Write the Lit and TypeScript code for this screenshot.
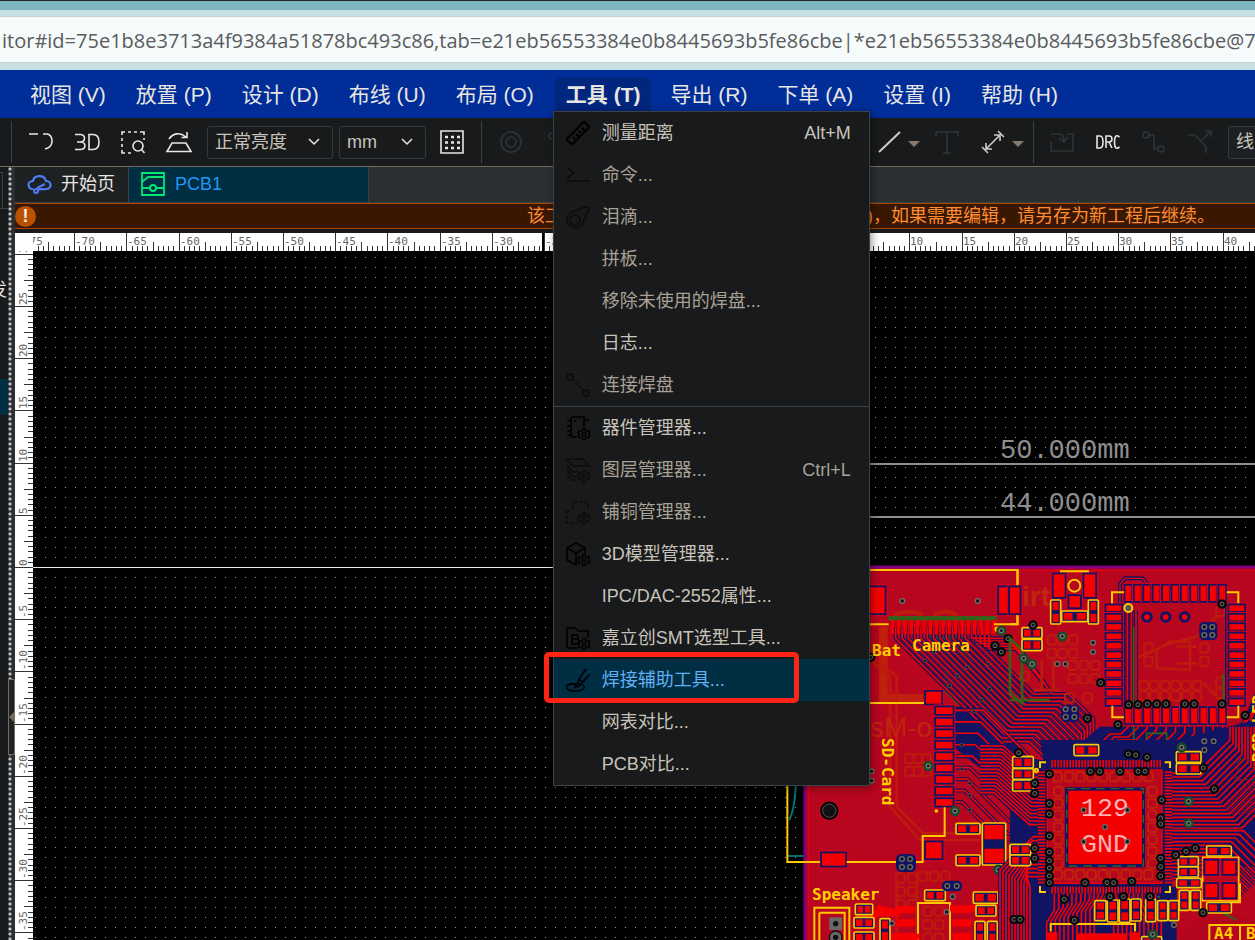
import { LitElement, html, svg, css } from "lit";
import { customElement } from "lit/decorators.js";
import { classMap } from "lit/directives/class-map.js";

/* ---------- icons (24 x 24, stroked with currentColor) ---------- */
const gear = svg`<g stroke-width="1.300"><circle cx="18" cy="18" r="1.800"/><path d="M17 12.500h2l.5 2 1.700.8 1.500-.8 1 2-1 1.500 1 1.500-1 2.200-1.700-.7-1.500.8-.5 1.700h-2l-.6-1.700-1.500-.8-1.700.7-1-2.200 1.200-1.500-1.200-1.500 1-2 1.700.8 1.500-.8z"/></g>`;
const icons: Record<string, unknown> = {
  track: svg`<path d="M0 4h9M14 4h4a5 7 0 0 1 5 7c0 4-3 7-7 8"/>`,
  view3d: svg`<path d="M0 4.500h5c6 0 6 7.500 0 7.500H2h3c6.500 0 6.500 7.500 0 7.500H0M14 4.500h4c4 0 6 3 6 7.500s-2 7.500-6 7.500h-4z"/>`,
  area: svg`<path d="M1 5V2h3M7 2h3M13 2h3M19 2h4v3M1 8v3M1 14v3M1 20v3h3M7 23h3M23 8v2"/><circle cx="17" cy="16" r="5"/><path d="M20.500 19.500l3 3.500"/>`,
  flip: svg`<path d="M5 13h14l5 8.500H0zM2 9c4-6 11-7 17-2M20 2v5.500h-5.500"/>`,
  grid: svg`<path d="M1 1h22v22H1z"/><path d="M5 7h3M11 7h3M17 7h3M5 12.500h3M11 12.500h3M17 12.500h3M5 18h3M11 18h3M17 18h3" stroke-width="2.500"/>`,
  via: svg`<circle cx="12" cy="12" r="10"/><circle cx="12" cy="12" r="5"/>`,
  node: svg`<circle cx="7" cy="6" r="3"/><path d="M9 8l10 10"/><circle cx="20" cy="20" r="3"/>`,
  line: svg`<path d="M2 22L23 2" stroke-width="2"/>`,
  text: svg`<path d="M1 6V2h22v4M12 2v21M8 23h8"/>`,
  dim: svg`<path d="M4 20L20 4M5 13v6h6M13 5h6v6M1 17l6 6M17 1l6 6"/>`,
  load: svg`<path d="M1 4h8c4 0 5 3 5 7M9 8l5 4 4-5M17 4h6v17H1V12"/>`,
  drc: svg`<path d="M1 6v12h3c2 0 3-2 3-6s-1-6-3-6zM10 18V6h3c4 0 4 6 0 6h-3m3 0l3 6M23.500 7c-4-3-5 0-5 5s1 8 5 5"/>`,
  net: svg`<circle cx="4" cy="5" r="3"/><circle cx="19" cy="19" r="3"/><path d="M7 5h5v14h4"/>`,
  branch: svg`<path d="M0 5h7l11 12v6M13 11L23 1M17 1h6v6"/>`,
  ruler: svg`<path d="M1 18L17 1.500q1-1 2 0L22.500 5q1 1 0 2L7 22.500q-1 1-2 0L1 19z" stroke-width="2"/><path d="M7 16l2 2M10 13l3 3M13 10l2 2M16 7l3 3" stroke-width="2"/>`,
  command: svg`<path d="M1 4l7 6-7 5M0 18h24"/>`,
  tear: svg`<circle cx="9" cy="15" r="5"/><path d="M1 15a8.500 8.500 0 0 0 16 3c2-5 3-9 6-13q0-4-4-3L7 6.500c-4 1-6 4-6 8.500"/>`,
  join: svg`<circle cx="4" cy="4" r="3"/><circle cx="20" cy="20" r="3"/><path d="M6 6l12 12" stroke-dasharray="3 2"/>`,
  device: svg`<path d="M5 5V3q0-2 2-2h11v10M5 5v14q0 2 2 2h4M1 5h4M1 10h4M1 15h4M1 19h4M18 4h5M9 4v2"/>${gear}`,
  layers: svg`<path d="M1 1h16l6 7H7zM1 7l6 7h5M1 12l6 7h4M1 17l5 5h4"/>${gear}`,
  copper: svg`<path d="M7 10V2h15v8M1 11h5M1 11v12h10" stroke-dasharray="3 2"/>${gear}`,
  cube: svg`<path d="M1 6l9-5 9 5v5M1 6v12l9 5V11M1 6l9 5 9-5"/>${gear}`,
  bom: svg`<path d="M1 22V2h8l3 3h10v7M1 22h11M6 9v9h4c4 0 4-5 0-5H6m0-4h4c3 0 3 4 0 4"/>${gear}`,
  solder: svg`<path d="M20 1L13 11M24 6L17 14M13 11l4 3-2 3-3-2zM12 15l-4 5 7-3"/><path d="M10 16c-12-1-13 7-1 7 9 0 11-4 8-6"/>`,
  cloud: svg`<path d="M6 17c-6 0-6-8 0-8C7 3 17 2 19 9c6 0 6 8 0 8-4 1-6-1-8 1" stroke-width="2.200"/><circle cx="9" cy="19" r="2" stroke-width="2"/><path d="M10 16l8-4" stroke-width="2"/>`,
  board: svg`<path d="M1 1h22v22H1zM1 10l6-5h16M1 16h8" stroke-width="1.800"/><circle cx="12" cy="16" r="3" stroke-width="2"/><path d="M15 16h8" stroke-width="2"/>`,
};
const icon = (name: string) =>
  html`<svg class="icon" viewBox="0 0 24 24" aria-hidden="true">${icons[name]}</svg>`;

/* ---------- ruler geometry ---------- */
const MM = 10.44;
const range = (n: number, from = 0) => Array.from({ length: n }, (_, i) => i + from);

/* ---------- board palette and drawing helpers ---------- */
const NAVY = "#111463";
const RED = "#f50000";
const YEL = "#ffc800";
const GREEN = "#37601c";

const pad = (x: number, y: number, w: number, h: number) => svg`
  <rect x=${x - 7} y=${y - 7} width=${w + 14} height=${h + 14} rx="4" fill=${NAVY} stroke="#e5001a" stroke-width="3"/>
  <rect x=${x} y=${y} width=${w} height=${h} fill=${RED}/>`;
const pair = ([x, y, w, h]: number[]) => {
  const wide = w > h;
  const pw = wide ? w * 0.34 : w - 12;
  const ph = wide ? h - 12 : h * 0.34;
  return svg`<rect x=${x} y=${y} width=${w} height=${h} rx="4" fill=${NAVY} stroke=${YEL} stroke-width="5"/>
    <rect x=${x + 6} y=${y + 6} width=${pw} height=${ph} fill=${RED}/>
    <rect x=${x + w - 6 - pw} y=${y + h - 6 - ph} width=${pw} height=${ph} fill=${RED}/>`;
};
const via = ([x, y]: number[]) => svg`<circle cx=${x} cy=${y} r="7" fill="#111" stroke="#6f6f6f" stroke-width="4"/>`;
const dark = ([x, y]: number[]) => svg`<circle cx=${x} cy=${y} r="10" fill="#111" stroke="#050505" stroke-width="8"/><circle cx=${x} cy=${y} r="6" fill="#111" stroke="#6f6f6f" stroke-width="3"/>`;
const green = ([x, y]: number[]) => svg`<circle cx=${x} cy=${y} r="12" fill="#142" stroke="#194a26" stroke-width="7"/><circle cx=${x} cy=${y} r="6" fill="#111" stroke="#777" stroke-width="4"/>`;
const trace = (d: string) => svg`<path d=${d} stroke=${NAVY} stroke-width="12"/>`;
const wire = (d: string) => svg`<path d=${d} stroke=${RED} stroke-width="5"/>`;
const bundle = (paths: string[]) => svg`<g fill="none" stroke-linejoin="round">${paths.map(trace)}${paths.map(wire)}</g>`;
const ghosts = (x: number, y: number, cols: number, rows: number, dx: number, dy: number) =>
  range(cols * rows).map((i) => svg`<rect x=${x + (i % cols) * dx} y=${y + Math.floor(i / cols) * dy} width="26" height="28" rx="8"/>`);

const cameraBus = range(14).map((i) => {
  const x = 347 + 19 * i;
  const level = 545 - 11 * i;
  const col = 823 + 9 * i;
  const run = 75;
  return `M${x} 200V235L${x + level - 235} ${level}H${Math.max(col - run, x + level - 235)}L${col} ${level + run}V740`;
});
const sdBus = range(9).map((j) => {
  const y = 451 + 34.4 * j;
  const turn = 610 - 8 * j;
  const end = 640 + 26 * j;
  return `M520 ${y}H${turn}L${turn + end - y} ${end}H810`;
});
const sensorBus = range(5).map((j) => `M${575 + j * 13} 225V${235 + j * 8}H${680 + j * 10}L${760 + j * 14} ${330 + j * 18}`);
const topFan = range(11).map((i) => {
  const x = 355 + 28.3 * i;
  return `M${x} 480V${500 + i * 3}L${x - 22 - i * 6} ${522 + i * 9}H${300 + i * 12}L${262 + i * 16} ${560 + i * 9}V620`;
});
const leftFan = range(15).map((k) => `M105 ${100 + 11 * k}H${72 - k}L${-20 - k * 2} ${18 + 11 * k - k}H-90`);
const lowLeftFan = range(11).map((k) => `M105 ${290 + 12 * k}H${70 - k * 2}L${-30 + k * 9} ${390 + 5 * k}V620`);
const bottomFan = range(24).map((k) => `M${133 + 13.2 * k} 440V${462 + Math.abs(12 - k) * 4}L${k < 12 ? 110 + 13 * k : 155 + 13 * k} ${500 + Math.abs(12 - k) * 4}V620`);
const rightUp = range(16).map((k) => `M460 ${100 + 11 * k}H${560 + k * 9}L${660 + k * 9} ${k * 11}V-40`);
const rightLow = range(14).map((k) => `M460 ${272 + 11 * k}H${700 - k * 12}L${800 - k * 12} ${372 + k * 11}`);

const boardLeft = svg`
  <g fill="none" stroke="#bd1b0d" stroke-width="8">
    <path d="M310 200V415H430" stroke="#c0200c" stroke-width="26"/>
    <path d="M270 300L330 350V740L420 840H600M290 300L350 350V740L430 820H620M350 960V1140M410 960V1140"/>
    <path d="M340 165q50-20 90 0M460 165q40-20 70 0" stroke-width="12"/>
    <g stroke-width="6">${ghosts(375, 582, 3, 2, 26, 38)}${ghosts(348, 940, 2, 3, 36, 40)}${ghosts(415, 935, 3, 1, 34, 30)}${ghosts(430, 1040, 2, 3, 34, 40)}</g>
  </g>
  <text x="270" y="530" font-size="84" fill="#be250c" font-family="Liberation Sans">sM-orbil</text>
  <path d="M440 225L540 225L740 425V540L690 540Z" fill="#4a2a2a"/>
  <path d="M325 175H650M460 240l60 0 60 60M500 330l0 60 40 40" stroke=${GREEN} stroke-width="14" fill="none"/>
  <path d="M520 440H600L700 540 800 640V800H720L620 640 520 560Z" fill=${NAVY}/>
  ${bundle(cameraBus)}${bundle(sdBus)}${bundle(sensorBus)}
  ${range(17).map((i) => svg`<rect x=${332 + 19 * i} y="180" width="10" height="42" fill=${RED}/>`)}
  ${pad(230, 82, 84, 78)}${pad(657, 82, 62, 78)}
  ${pad(438, 395, 46, 36)}${range(9).map((j) => pad(468, 442 + 34.4 * j, 50, 20))}
  ${pad(438, 847, 47, 48)}${pad(126, 880, 70, 37)}
  <g fill="none" stroke=${YEL} stroke-width="6">
    <path d="M240 30H713V76M713 165V193H642M240 193H326M240 429H432M22 600V906H120M200 906H428V828H494V742"/>
    <path d="M103 1140V1043H208V1140M118 1140V1075M118 1058H194V1140M118 1058V1078M414 1140V1029H510V1140"/>
  </g>
  <g stroke=${YEL} stroke-width="5" fill=${YEL}><circle cx="652" cy="208" r="6"/><circle cx="469" cy="753" r="3"/></g>
  <path d="M270 1060H360L300 1045 265 1090M510 1045H590M330 1130H420" stroke=${RED} stroke-width="18" fill="none"/>
  ${range(3).map((i) => svg`<rect x="345" y=${1038 + i * 40} width="62" height="22" rx="10" fill=${RED}/><rect x="515" y=${1038 + i * 40} width="60" height="22" rx="10" fill=${RED}/>`)}
  ${[[528, 790, 72, 32], [528, 885, 72, 32], [434, 990, 62, 32], [580, 996, 74, 34], [588, 1036, 60, 32], [226, 1032, 52, 32], [222, 1072, 60, 32], [222, 1116, 60, 32], [300, 1076, 30, 70], [585, 1084, 30, 66], [622, 1084, 30, 66], [699, 590, 60, 34], [699, 624, 60, 34], [699, 660, 60, 34], [690, 853, 62, 32], [690, 885, 62, 32], [607, 789, 70, 126]].map(pair)}
  <g fill=${NAVY}><rect x="348" y="882" width="60" height="54" rx="16"/><rect x="486" y="962" width="60" height="32" rx="14"/></g>
  ${[[367, 123], [593, 123], [275, 634], [275, 662], [366, 897], [390, 897], [366, 921], [390, 921], [502, 978], [530, 978], [518, 1010], [336, 1090], [500, 1056]].map(via)}
  ${[[435, 302], [462, 276], [561, 321], [533, 348], [509, 377], [629, 387], [605, 420], [582, 454], [545, 555], [545, 627], [569, 670], [569, 706], [569, 750], [625, 312], [677, 961], [677, 980]].map(([x, y]) => svg`<circle cx=${x} cy=${y} r="5" fill="#111" stroke="#666" stroke-width="2"/>`)}
  ${[[684, 236], [645, 257], [664, 276], [272, 292], [692, 1080], [714, 1080], [692, 920]].map(dark)}
  ${[[664, 212], [445, 618], [525, 753], [655, 929], [677, 1048]].map(green)}
  <circle cx="148" cy="752" r="24" fill="#111" stroke="#000" stroke-width="7"/><circle cx="148" cy="752" r="20" fill="none" stroke="#777" stroke-width="2"/>
  <rect x="148" y="1072" width="38" height="38" fill="#686868"/><circle cx="167" cy="1091" r="8" fill="#111"/><circle cx="167" cy="1132" r="19" fill="#686868" stroke="#111" stroke-width="4"/><circle cx="167" cy="1132" r="8" fill="#111"/>`;

const boardTop = svg`
  <g fill="none" stroke="#bd1b0d" stroke-width="6">
    ${ghosts(112, 226, 3, 2, 32, 40)}${ghosts(175, 302, 3, 2, 34, 40)}${ghosts(30, 335, 1, 1, 30, 30)}${ghosts(165, 400, 2, 1, 55, 30)}
    ${ghosts(388, 362, 6, 2, 32, 32)}${ghosts(402, 250, 1, 2, 30, 40)}${ghosts(570, 250, 1, 2, 30, 40)}${ghosts(618, 352, 1, 2, 30, 34)}${ghosts(618, 140, 1, 1, 30, 34)}
    <path d="M70 390H150M95 300V390M130 300V390M365 300L480 250 560 230 620 170M440 325V270L480 245H540V330ZM500 260h60M500 310h60M580 370l60 60" stroke-width="8"/>
  </g>
  <text x="36" y="138" font-size="84" fill="#c0280c" font-family="Liberation Sans" font-weight="700">irt</text>
  <path d="M0 235L36 270V430L0 400ZM280 300h20M0 420l120 0" stroke=${GREEN} stroke-width="8" fill="none"/>
  <path d="M270 500H650L520 600H160L200 560Z" fill=${NAVY}/>
  <path d="M650 600L735 400V600Z" fill=${NAVY}/>
  ${bundle(topFan)}
  ${bundle(range(5).map((k) => `M${640 + k * 18} 620L${690 + k * 16} ${540 - k * 6}V${500 - k * 10}L760 ${420 - k * 10}`))}
  <path d="M330 130V72L345 55H398L412 72V100" stroke=${NAVY} stroke-width="12" fill="none"/><path d="M330 130V72L345 55H398L412 72V100" stroke=${RED} stroke-width="4" fill="none"/>
  <rect x="341" y="128" width="308" height="312" fill="none" stroke=${NAVY} stroke-width="8"/>
  ${bundle(["M352 150V470", "M364 150V470", "M378 150V470"])}
  <path d="M371 200V600M640 340V440M410 520V600H470V520Z" stroke=${GREEN} stroke-width="5" fill="none"/>
  ${range(11).map((i) => svg`${pad(346 + 28.2 * i, 77, 18, 46)}${pad(346 + 28.2 * i, 444, 18, 46)}${pad(289, 136 + 28.2 * i, 45, 17)}${pad(658, 136 + 28.2 * i, 45, 17)}`)}
  ${pad(0, 82, 29, 78)}${pad(131, 43, 33, 68)}${pad(223, 43, 33, 68)}${pad(178, 108, 32, 34)}
  <g fill="none" stroke=${YEL} stroke-width="6"><path d="M0 30H22V76M22 165V193H0M150 34H237M306 130V97H342M650 97H685V130M307 437V472H342M650 472H685V437"/><circle cx="193" cy="77" r="18"/><circle cx="355" cy="144" r="12" fill="#555"/></g>
  ${[[122, 120, 30, 72], [235, 120, 30, 72], [155, 153, 78, 32], [36, 203, 60, 32], [36, 238, 60, 34], [192, 553, 74, 34], [498, 575, 74, 34]].map(pair)}
  ${[411, 467, 524].map((x) => svg`<circle cx=${x} cy="171" r="13" fill=${RED} stroke=${NAVY} stroke-width="9"/>`)}
  <g fill=${NAVY}><rect x="568" y="186" width="54" height="54" rx="14"/><rect x="153" y="436" width="54" height="50" rx="14"/></g>
  ${[[583, 201], [607, 201], [583, 225], [607, 225], [249, 248], [249, 276], [167, 448], [193, 448], [167, 471], [193, 471], [142, 312], [166, 312], [583, 543], [611, 543], [583, 570]].map(via)}
  ${[[69, 195], [636, 132], [356, 434], [384, 434], [412, 432], [440, 432], [468, 432], [524, 432], [552, 432], [636, 432], [324, 494], [232, 475], [706, 466], [26, 579], [272, 368], [355, 585], [377, 585]].map(dark)}
  ${[[157, 229], [41, 295], [66, 312], [515, 562]].map(green)}`;

const boardChip = svg`
  <path d="M0 40L90 60V540L0 600ZM90 0H500L735 -60V380H480V60H100ZM90 440H500V600H0V500Z" fill=${NAVY}/>
  <path d="M500 600L600 500 735 540V600ZM600 230L735 100V220ZM240 460h200v30h-200z" fill="#b3061e"/>
  <g fill="none" stroke=${GREEN} stroke-width="6"><path d="M0 400V600M30 420V560M60 430V600M250 470h200M520 330l60-30M660 80l60-40M690 60h45v60h-60zM600 500l80 40"/></g>
  ${bundle(leftFan)}${bundle(lowLeftFan)}${bundle(bottomFan)}${bundle(rightUp)}${bundle(rightLow)}
  <rect x="84" y="60" width="402" height="400" fill=${NAVY}/>
  ${range(37).map((i) => svg`<g fill=${RED}><rect x=${124 + 9 * i} y="60" width="5" height="22"/><rect x=${124 + 9 * i} y="440" width="5" height="20"/><rect x="84" y=${94 + 9.2 * i} width="22" height="5"/><rect x="464" y=${94 + 9.2 * i} width="22" height="5"/></g>`)}
  <rect x="112" y="90" width="344" height="340" fill="#b8061f" stroke=${RED} stroke-width="4"/>
  <g fill="none" stroke="#c0200c" stroke-width="6">
    ${ghosts(130, 96, 9, 1, 34, 30)}${ghosts(130, 390, 9, 1, 34, 30)}${ghosts(132, 140, 1, 7, 30, 36)}${ghosts(414, 140, 1, 7, 30, 36)}
  </g>
  <rect x="165" y="142" width="240" height="240" fill=${NAVY}/><path d="M170 146H400V378H170Z" fill="none" stroke=${GREEN} stroke-width="4" stroke-dasharray="26 18"/>
  <rect x="175" y="152" width="221" height="220" fill=${RED}/>
  <text x="285" y="228" font-size="80" text-anchor="middle" fill="#ffb0b0" font-family="Liberation Mono">129</text>
  <text x="285" y="336" font-size="80" text-anchor="middle" fill="#ffb0b0" font-family="Liberation Mono">GND</text>
  <g fill="none" stroke=${YEL} stroke-width="6"><path d="M90 84V67H108M464 67H480V84M90 438V456H108M464 456H480V438M122 574V552H375V574M690 430V487H660"/><circle cx="79" cy="91" r="5"/></g>
  <g fill=${RED}><rect x="198" y="580" width="150" height="20"/><rect x="112" y="577" width="30" height="23"/><rect x="358" y="577" width="30" height="23"/></g>
  ${[[192, 14, 74, 33], [8, 50, 62, 34], [8, 86, 62, 32], [8, 120, 62, 33], [0, 313, 62, 32], [0, 345, 62, 32], [499, 35, 74, 32], [499, 70, 74, 32], [590, 318, 74, 30], [505, 350, 60, 30], [505, 381, 60, 30], [500, 415, 74, 28], [508, 451, 30, 60], [542, 451, 30, 60], [590, 487, 74, 32], [254, 482, 34, 60], [292, 480, 32, 66], [328, 477, 32, 70], [363, 477, 30, 66], [407, 477, 30, 68], [443, 482, 30, 60], [476, 482, 30, 60], [395, 590, 60, 30]].map(pair)}
  <rect x="578" y="352" width="108" height="130" fill="#b8061f" stroke=${YEL} stroke-width="5"/>
  ${pad(586, 362, 36, 40)}${pad(640, 362, 36, 40)}${pad(586, 432, 36, 40)}${pad(640, 432, 36, 40)}
  <g fill="#b8061f" stroke=${YEL} stroke-width="6"><rect x="598" y="555" width="92" height="60"/><rect x="690" y="555" width="92" height="60"/></g>
  ${[[221, 210], [352, 210], [285, 261], [221, 305], [352, 305], [492, 555], [583, 4], [611, 4], [583, 30]].map(via)}
  ${[[118, 102], [241, 94], [269, 94], [330, 94], [384, 94], [405, 94], [118, 190], [118, 222], [118, 288], [118, 336], [118, 362], [118, 384], [118, 408], [118, 428], [225, 428], [291, 428], [311, 428], [365, 424], [455, 180], [452, 234], [452, 252], [452, 355], [452, 380], [452, 408], [163, 478], [193, 541], [12, 538], [30, 538], [26, 38], [613, 147], [580, 84], [497, 345], [528, 334], [556, 325], [579, 518], [411, 52], [355, 42], [377, 45], [74, 130], [74, 160], [300, 470], [340, 470], [420, 470], [74, 325], [74, 355]].map(dark)}
  ${[[536, 184], [536, 250], [515, 22], [428, 583]].map(green)}`;

const silk = (x: number, y: number, label: string) =>
  svg`<text x=${x} y=${y} class="silk">${label}</text>`;

interface Entry { label: string; icon?: string; key?: string; off?: boolean; active?: boolean; rule?: boolean; }
const entries: Entry[] = [
  { label: "测量距离", icon: "ruler", key: "Alt+M" },
  { label: "命令...", icon: "command", off: true },
  { label: "泪滴...", icon: "tear", off: true },
  { label: "拼板...", off: true },
  { label: "移除未使用的焊盘...", off: true },
  { label: "日志..." },
  { label: "连接焊盘", icon: "join", off: true },
  { label: "器件管理器...", icon: "device", rule: true },
  { label: "图层管理器...", icon: "layers", key: "Ctrl+L", off: true },
  { label: "铺铜管理器...", icon: "copper", off: true },
  { label: "3D模型管理器...", icon: "cube" },
  { label: "IPC/DAC-2552属性..." },
  { label: "嘉立创SMT选型工具...", icon: "bom" },
  { label: "焊接辅助工具...", icon: "solder", active: true },
  { label: "网表对比..." },
  { label: "PCB对比..." },
];
const menus = ["视图 (V)", "放置 (P)", "设计 (D)", "布线 (U)", "布局 (O)", "工具 (T)", "导出 (R)", "下单 (A)", "设置 (I)", "帮助 (H)"];

@customElement("app-root")
export class AppRoot extends LitElement {
  static styles = css`
    :host { display: flex; flex-direction: column; height: 100vh; overflow: hidden; background: #181a1b; color: #e8e6e3;
      font: 18px/24px "Liberation Sans", "Noto Sans CJK SC", sans-serif; }
    * { box-sizing: border-box; }
    button, select, input { font: inherit; color: inherit; border: 0; background: none; padding: 0; margin: 0; border-radius: 0; }
    .icon { width: 24px; height: 24px; flex: none; display: block; fill: none; stroke: currentColor; stroke-width: 1.6; overflow: visible; }

    .browser { flex: none; background: #c7dfe3; border-top: 1px solid #26262a; }
    .strip { height: 9px; background: #7cb4bf; }
    .address { display: block; width: 100%; height: 47px; margin: 6px 0 7px; padding: 1px 0 0 2px; background: #f5fafb;
      border: solid #cbcfd0; border-width: 1px 0; color: #5b5b5b; font: 20px/28px "Open Sans", sans-serif; }

    .menubar { flex: none; display: flex; height: 48px; padding: 8px 15px 7px; background: #002d98; font-size: 21px; position: relative; z-index: 2; }
    .menubar .slot { position: relative; flex: none; }
    .menubar .title { height: 33px; padding: 0 15px; white-space: nowrap; display: block; }
    .menubar .open { font-weight: 700; background: #00267e; border-radius: 4px 4px 0 0; padding: 0 11px; margin: 0 4px 0 0; }
    .menubar .open-slot { padding-left: 6px; }
    .dropdown { position: absolute; top: 33px; left: 4px; width: 317px; margin: 0; padding: 0; list-style: none; background: #181a1b;
      border: 1px solid #3c4144; font-size: 18px; color: #c8c3ba; box-shadow: 2px 2px 8px rgba(0, 0, 0, 0.4); }
    .dropdown li { position: relative; }
    .dropdown .rule { border-top: 1px solid #3c4144; }
    .entry { display: flex; align-items: center; width: 100%; height: 42px; padding: 0 18px 0 12px; gap: 12px; text-align: left; }
    .entry .icon { color: #000; }
    .entry .label { flex: 1; white-space: nowrap; }
    .entry.off { color: #a8a195; }
    .entry.off .icon { color: #0b0c0d; }
    .entry.active { background: #002e43; color: #62b0f3; }
    .blank { width: 24px; flex: none; }
    .mark { position: absolute; inset: -7px 70px -2px -10px; border: 5px solid #ff2414; border-radius: 5px; pointer-events: none; z-index: 1; }

    .toolbar { flex: none; display: flex; align-items: center; height: 49px; padding-left: 11px; border-bottom: 1px solid #736b5e; overflow: hidden; }
    .group { display: flex; align-items: center; flex: none; gap: 22px; }
    .split { gap: 7px; }
    .sep { width: 1px; height: 42px; background: #3c4144; flex: none; margin: 0 17px; }
    .sep.first { margin-left: 0; }
    .sep.mid { margin-right: 14px; }
    .sep.near { margin: 0 16px 0 9px; }
    .tool { width: 24px; height: 24px; flex: none; }
    .dim { color: #303436; }
    .soft { color: #d0ccc5; }
    .caret { width: 12px; height: 24px; }
    .caret svg { display: block; margin-top: 4px; fill: #857a6b; }
    .picks { display: flex; gap: 6px; margin: 0 14px 0 16px; }
    .pick { display: grid; flex: none; color: #c8c3ba; }
    .pick select, .pick svg { grid-area: 1 / 1; }
    .pick select { appearance: none; width: 126px; height: 33px; padding: 0 7px; border: 1px solid #34393b; border-radius: 3px; background: #181a1b; }
    .pick .narrow { width: 87px; }
    .pick .fill { background: #1d2022; }
    .pick svg { justify-self: end; align-self: center; margin-right: 13px; fill: none; stroke: #e8e6e3; stroke-width: 1.5; pointer-events: none; }
    .far { margin: 0 0 0 15px; }
    .last { margin-left: 16px; flex: none; }

    .body { flex: 1; min-height: 0; display: grid; grid-template-columns: 8px 7px minmax(0, 1fr); grid-template-rows: minmax(0, 1fr); }
    .side { overflow: hidden; display: flex; flex-direction: column; white-space: nowrap; }
    .side .box { width: 3px; height: 36px; margin-top: 5px; border: solid #3c4144; border-width: 1px 1px 0 0; }
    .side .foot { border-top: 1px solid #3c4144; height: 70px; }
    .side .cut { display: block; margin-left: -11px; height: 101px; }
    .side .row { height: 36px; background: #002e43; }
    .splitter { display: flex; flex-direction: column; background: radial-gradient(circle at 2px 2px, #c4c4c4 1px, #2b2f31 2px) 0 0 / 7px 5px; }
    .fold { width: 7px; height: 76px; margin-top: 512px; border: 1px solid #736b5e; background: #202324; }
    .fold svg { display: block; fill: #736b5e; }
    .main { min-width: 0; display: grid; grid-template-rows: 36px 26px 4px 18px minmax(0, 1fr); }
    .tabs { display: flex; background: #2a2f31; border-bottom: 1px solid #3c4144; }
    .tab { display: flex; align-items: center; gap: 10px; padding: 0 13px 2px 12px; border-right: 1px solid #3c4144; background: #1e2122; white-space: nowrap; }
    .tab.current { width: 240px; background: #002e43; color: #2196f3; }
    .brand { color: #4f7df8; }
    .lime { color: #00e673; }
    .notice { display: flex; align-items: center; background: #3a1700; border: solid #a84600; border-width: 1px 0; color: #ff8c33; overflow: hidden; white-space: nowrap; }
    .badge { flex: none; width: 21px; height: 21px; border-radius: 50%; background: #b85200; color: #f3eee8; font-weight: 700; line-height: 21px; text-align: center; margin-right: 491px; }
    .hruler { grid-row: 4; display: grid; grid-template-columns: 18px minmax(0, 1fr); background: #fff; }
    .canvas { grid-row: 5; display: grid; grid-template-columns: 18px minmax(0, 1fr); grid-template-rows: minmax(0, 1fr); min-height: 0; background: #000; }
    .vruler { background: #fff; }
    .plane { display: block; width: 100%; height: 100%; overflow: hidden; }
    .tick { stroke: #333; stroke-width: 1; shape-rendering: crispEdges; }
    .num { font: 11px "DejaVu Sans Mono", monospace; fill: #666; }
    .silk { font: 700 16px "DejaVu Sans Mono", monospace; fill: #ffcf00; }
    .size { font: 27px "Liberation Mono", monospace; fill: #8e8e8e; }
  `;

  private ticks(vertical: boolean) {
    const origin = vertical ? 567 - 251 : 805 - 33;
    return (vertical ? range(151, -90) : range(400, -150)).map((i) => {
      const at = Math.round(vertical ? origin - (i * MM) / 2 : origin + (i * MM) / 2);
      const major = i % 10 === 0;
      const len = major ? 18 : i % 5 === 0 ? 9 : 5;
      const label = String(i / 2);
      return vertical
        ? svg`<path class="tick" d="M${18 - len} ${at + 0.5}H18"/>${major ? svg`<text class="num" transform="translate(12 ${at - 1}) rotate(-90)">${label}</text>` : ""}`
        : svg`<path class="tick" d="M${at + 0.5} ${18 - len}V18"/>${major ? svg`<text class="num" x=${at + 1} y="12">${label}</text>` : ""}`;
    });
  }

  private tool(name: string, label: string, kind = "") {
    return html`<button class="tool ${kind}" aria-label=${label}>${icon(name)}</button>`;
  }
  private caret() {
    return html`<button class="caret" aria-label="更多"><svg width="12" height="7"><path d="M0 0H12L6 6Z"/></svg></button>`;
  }
  private pick(label: string, value: string, kind = "") {
    return html`<label class="pick"><select class=${kind} aria-label=${label}><option>${value}</option></select>
      <svg width="12" height="8"><path d="M1 1L6 6L11 1"/></svg></label>`;
  }

  private dropdown() {
    return html`<ul class="dropdown">${entries.map((e) => html`
      <li class=${classMap({ rule: !!e.rule })}>
        <button class=${classMap({ entry: true, off: !!e.off, active: !!e.active })}>
          ${e.icon ? icon(e.icon) : html`<span class="blank"></span>`}
          <span class="label">${e.label}</span>${e.key ? html`<span>${e.key}</span>` : ""}
        </button>
        ${e.active ? html`<span class="mark"></span>` : ""}
      </li>`)}</ul>`;
  }

  private plane() {
    return html`<svg class="plane" role="img" aria-label="PCB">
      <defs><pattern id="dots" x="2" y="6" width="10" height="10" patternUnits="userSpaceOnUse"><rect width="1" height="1" fill="#969696"/></pattern></defs>
      <rect width="100%" height="100%" fill="url(#dots)"/>
      <g transform="translate(-33 -251)">
        <path d="M33 567.500H805" stroke="#e8e8e8"/>
        <path d="M805 464H1400M805 517H1400" stroke="#8e8e8e" stroke-width="2"/>
        <text class="size" x="1000" y="458">50.000mm</text><text class="size" x="1000" y="511">44.000mm</text>
        <path d="M796 780q-1 30-7 40M788 856h20" stroke="#067070" stroke-width="2" fill="none"/>
        <rect x="805" y="567" width="700" height="600" fill="#b8061f" stroke="#800080" stroke-width="3"/>
        <path d="M808.500 1100V570.500H1400" stroke="#e00018" fill="none"/>
        <g transform="translate(780 560) scale(.33333)">${boardLeft}</g>
        <g transform="translate(1010 560) scale(.33333)">${boardTop}</g>
        <g transform="translate(1010 740) scale(.33333)">${boardChip}</g>
        ${silk(872, 656, "Bat")}${silk(912, 651, "Camera")}${silk(812, 900, "Speaker")}
        ${silk(1214, 939, "A4")}${silk(1246, 939, "B4")}
        <text class="silk" transform="translate(882 738) rotate(90)">SD-Card</text>
        <text class="silk" transform="translate(1264 762) rotate(-90)">RGB-LED</text>
      </g>
    </svg>`;
  }

  render() {
    return html`
      <header class="browser">
        <div class="strip"></div>
        <input class="address" aria-label="地址" value="itor#id=75e1b8e3713a4f9384a51878bc493c86,tab=e21eb56553384e0b8445693b5fe86cbe|*e21eb56553384e0b8445693b5fe86cbe@75e1b8e3713a4f93" />
      </header>
      <nav class="menubar">${menus.map((m, i) => i === 5
        ? html`<div class="slot open-slot"><button class="title open">${m}</button>${this.dropdown()}</div>`
        : html`<div class="slot"><button class="title">${m}</button></div>`)}</nav>
      <div class="toolbar">
        <span class="sep first"></span>
        <div class="group">
          ${this.tool("track", "走线")}${this.tool("view3d", "3D")}${this.tool("area", "区域缩放")}${this.tool("flip", "翻转")}
        </div>
        <div class="picks">${this.pick("亮度", "正常亮度")}${this.pick("单位", "mm", "narrow")}</div>
        ${this.tool("grid", "网格")}
        <span class="sep"></span>
        <div class="group">
          ${this.tool("via", "过孔", "dim")}${this.tool("node", "焊盘", "dim")}${range(6).map(() => this.tool("net", "布线", "dim"))}
        </div>
        <span class="sep mid"></span>
        <div class="group split">${this.tool("line", "线条", "soft")}${this.caret()}</div>
        <div class="group far">
          ${this.tool("text", "文本", "dim")}
          <div class="group split">${this.tool("dim", "尺寸", "soft")}${this.caret()}</div>
        </div>
        <span class="sep near"></span>
        <div class="group">
          ${this.tool("load", "导入", "dim")}${this.tool("drc", "DRC")}${this.tool("net", "网络", "dim")}${this.tool("branch", "分支", "dim")}
        </div>
        <div class="last">${this.pick("线宽", "线宽", "fill")}</div>
      </div>
      <div class="body">
        <aside class="side"><div class="box"></div><div class="foot"></div><span class="cut">发:</span><div class="row"></div></aside>
        <div class="splitter"><button class="fold" aria-label="折叠"><svg width="5" height="10"><path d="M5 0V10L0 5Z"/></svg></button></div>
        <main class="main">
          <div class="tabs">
            <button class="tab"><span class="brand">${icon("cloud")}</span>开始页</button>
            <button class="tab current"><span class="lime">${icon("board")}</span>PCB1</button>
          </div>
          <div class="notice"><span class="badge">!</span><span>该工程由其他成员锁定，当前为只读模式(1)，如果需要编辑，请另存为新工程后继续。</span></div>
          <div class="hruler"><span></span><svg class="plane">${this.ticks(false)}<rect x="509" width="2" height="18"/></svg></div>
          <div class="canvas"><svg class="plane vruler">${this.ticks(true)}</svg>${this.plane()}</div>
        </main>
      </div>`;
  }
}
